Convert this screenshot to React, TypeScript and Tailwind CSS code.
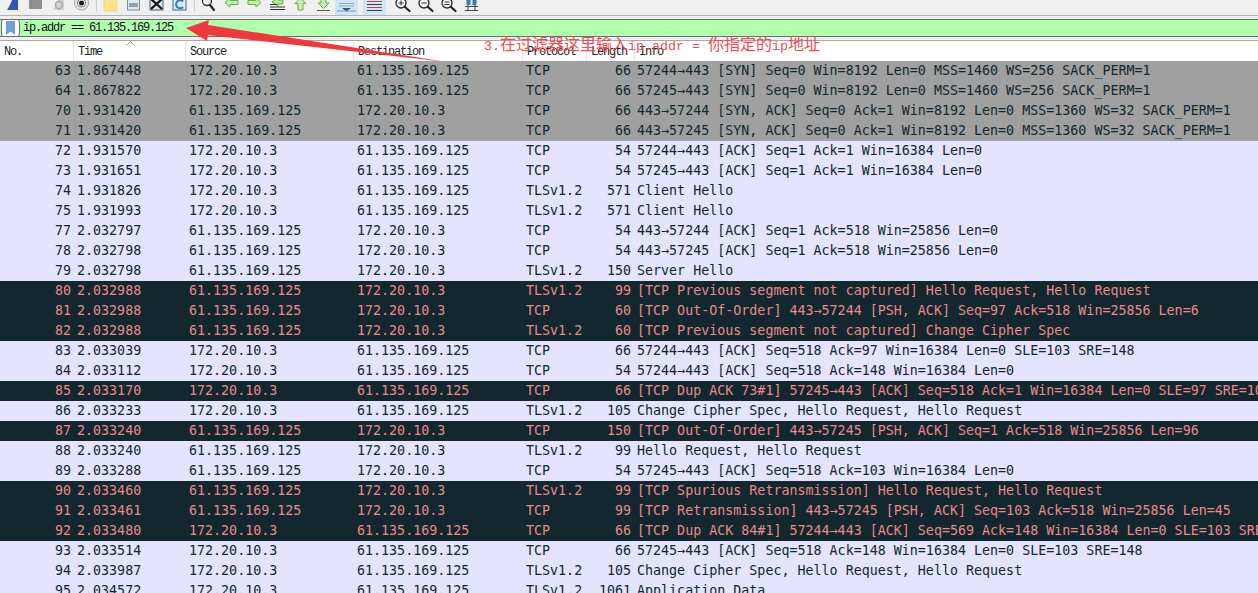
const columnGrid = "grid grid-cols-[73px_112px_168px_169px_64px_48px_1fr]";

type RowKind = "syn" | "normal" | "bad";

const rowStyles: Record<RowKind, string> = {
  syn: "bg-[#a0a0a0] text-[#12272e]",
  normal: "bg-[#e4e4ff] text-[#12272e]",
  bad: "bg-[#12272e] text-[#ea8a8a]",
};

const A = "172.20.10.3";
const B = "61.135.169.125";

const packets: [RowKind, number, string, string, string, string, number, string][] = [
  ["syn", 63, "1.867448", A, B, "TCP", 66, "57244→443 [SYN] Seq=0 Win=8192 Len=0 MSS=1460 WS=256 SACK_PERM=1"],
  ["syn", 64, "1.867822", A, B, "TCP", 66, "57245→443 [SYN] Seq=0 Win=8192 Len=0 MSS=1460 WS=256 SACK_PERM=1"],
  ["syn", 70, "1.931420", B, A, "TCP", 66, "443→57244 [SYN, ACK] Seq=0 Ack=1 Win=8192 Len=0 MSS=1360 WS=32 SACK_PERM=1"],
  ["syn", 71, "1.931420", B, A, "TCP", 66, "443→57245 [SYN, ACK] Seq=0 Ack=1 Win=8192 Len=0 MSS=1360 WS=32 SACK_PERM=1"],
  ["normal", 72, "1.931570", A, B, "TCP", 54, "57244→443 [ACK] Seq=1 Ack=1 Win=16384 Len=0"],
  ["normal", 73, "1.931651", A, B, "TCP", 54, "57245→443 [ACK] Seq=1 Ack=1 Win=16384 Len=0"],
  ["normal", 74, "1.931826", A, B, "TLSv1.2", 571, "Client Hello"],
  ["normal", 75, "1.931993", A, B, "TLSv1.2", 571, "Client Hello"],
  ["normal", 77, "2.032797", B, A, "TCP", 54, "443→57244 [ACK] Seq=1 Ack=518 Win=25856 Len=0"],
  ["normal", 78, "2.032798", B, A, "TCP", 54, "443→57245 [ACK] Seq=1 Ack=518 Win=25856 Len=0"],
  ["normal", 79, "2.032798", B, A, "TLSv1.2", 150, "Server Hello"],
  ["bad", 80, "2.032988", B, A, "TLSv1.2", 99, "[TCP Previous segment not captured] Hello Request, Hello Request"],
  ["bad", 81, "2.032988", B, A, "TCP", 60, "[TCP Out-Of-Order] 443→57244 [PSH, ACK] Seq=97 Ack=518 Win=25856 Len=6"],
  ["bad", 82, "2.032988", B, A, "TLSv1.2", 60, "[TCP Previous segment not captured] Change Cipher Spec"],
  ["normal", 83, "2.033039", A, B, "TCP", 66, "57244→443 [ACK] Seq=518 Ack=97 Win=16384 Len=0 SLE=103 SRE=148"],
  ["normal", 84, "2.033112", A, B, "TCP", 54, "57244→443 [ACK] Seq=518 Ack=148 Win=16384 Len=0"],
  ["bad", 85, "2.033170", A, B, "TCP", 66, "[TCP Dup ACK 73#1] 57245→443 [ACK] Seq=518 Ack=1 Win=16384 Len=0 SLE=97 SRE=103"],
  ["normal", 86, "2.033233", A, B, "TLSv1.2", 105, "Change Cipher Spec, Hello Request, Hello Request"],
  ["bad", 87, "2.033240", B, A, "TCP", 150, "[TCP Out-Of-Order] 443→57245 [PSH, ACK] Seq=1 Ack=518 Win=25856 Len=96"],
  ["normal", 88, "2.033240", B, A, "TLSv1.2", 99, "Hello Request, Hello Request"],
  ["normal", 89, "2.033288", B, A, "TCP", 54, "57245→443 [ACK] Seq=518 Ack=103 Win=16384 Len=0"],
  ["bad", 90, "2.033460", B, A, "TLSv1.2", 99, "[TCP Spurious Retransmission] Hello Request, Hello Request"],
  ["bad", 91, "2.033461", B, A, "TCP", 99, "[TCP Retransmission] 443→57245 [PSH, ACK] Seq=103 Ack=518 Win=25856 Len=45"],
  ["bad", 92, "2.033480", A, B, "TCP", 66, "[TCP Dup ACK 84#1] 57244→443 [ACK] Seq=569 Ack=148 Win=16384 Len=0 SLE=103 SRE=148"],
  ["normal", 93, "2.033514", A, B, "TCP", 66, "57245→443 [ACK] Seq=518 Ack=148 Win=16384 Len=0 SLE=103 SRE=148"],
  ["normal", 94, "2.033987", A, B, "TLSv1.2", 105, "Change Cipher Spec, Hello Request, Hello Request"],
  ["normal", 95, "2.034572", A, B, "TLSv1.2", 1061, "Application Data"],
];

const headers = ["No.", "Time", "Source", "Destination", "Protocol", "Length", "Info"];

function Slot({ children, active }: { children: React.ReactNode; active?: boolean }) {
  return (
    <svg
      viewBox="0 0 23 15"
      className={`w-[23px] h-[15px] shrink-0 ${active ? "bg-[#d3e6f7]" : ""}`}
    >
      {children}
    </svg>
  );
}

const Sep = () => (
  <div className="w-[6px] h-[15px] shrink-0 flex justify-center">
    <div className="w-px h-[12px] bg-[#cfcfcf]" />
  </div>
);

function Magnifier({ sign }: { sign: "plus" | "minus" | "equal" }) {
  return (
    <Slot>
      <circle cx="10" cy="3" r="5" fill="#eef4fa" stroke="#2a2a2a" strokeWidth="1.3" />
      <path d="M14 7l4.5 4" stroke="#222" strokeWidth="2.2" strokeLinecap="round" />
      {sign === "plus" && <path d="M7.5 3h5M10 .5v5" stroke="#333" strokeWidth="1" />}
      {sign === "minus" && <path d="M7.5 3h5" stroke="#333" strokeWidth="1" />}
      {sign === "equal" && <path d="M7.5 2h5M7.5 4.500h5" stroke="#333" strokeWidth="1" />}
    </Slot>
  );
}

function Toolbar() {
  return (
    <div className="flex h-[15px] pl-px overflow-hidden bg-[#f0f0f0]">
      <Slot>
        <path d="M6 10C8 7 10 3 12 -2H17V10Z" fill="#2f55b8" />
      </Slot>
      <Slot>
        <rect x="5" y="-3" width="13" height="12" fill="#8f8f8f" />
      </Slot>
      <Slot>
        <path d="M6 10L12 -2H17V10Z" fill="#d3d3d3" />
        <circle cx="12" cy="5" r="3.500" fill="none" stroke="#a5a5a5" strokeWidth="1.300" />
      </Slot>
      <Slot>
        <circle cx="11.500" cy="3" r="7" fill="#e6e6e6" stroke="#a8a8a8" />
        <circle cx="11.500" cy="3" r="4" fill="#fff" stroke="#777" />
        <circle cx="11.500" cy="3" r="2.500" fill="#1c1c1c" />
      </Slot>
      <Sep />
      <Slot>
        <path d="M5 -2H15L18 2V11H5Z" fill="#fde38c" stroke="#ecc96a" strokeWidth="0.600" />
      </Slot>
      <Slot>
        <rect x="5.500" y="-2" width="12" height="12" fill="#e4e8ec" stroke="#7f8c96" />
        <rect x="7" y="3" width="9" height="4" fill="#8aa2b4" />
      </Slot>
      <Slot>
        <rect x="5" y="-2" width="13" height="12" fill="#dbe7ef" stroke="#45606f" />
        <path d="M6 -1L17 9M17 -1L6 9" stroke="#111" strokeWidth="2.200" />
      </Slot>
      <Slot>
        <rect x="5" y="-2" width="13" height="12" fill="#dfeaf2" stroke="#3d6d8f" />
        <path d="M15 1.500A4 4 0 1 0 15 7" fill="none" stroke="#1f7ec4" strokeWidth="2" />
      </Slot>
      <Sep />
      <Slot>
        <circle cx="10" cy="1" r="4.500" fill="#f4f4f4" stroke="#2b2b2b" strokeWidth="1.300" />
        <path d="M13 5l4 5" stroke="#222" strokeWidth="2.200" strokeLinecap="round" />
      </Slot>
      <Slot>
        <path d="M5 2.500L10 -2V0.500H18V4.500H10V7Z" fill="#c6eeb0" stroke="#6fae4f" />
      </Slot>
      <Slot>
        <path d="M18 2.500L13 -2V0.500H5V4.500H13V7Z" fill="#c6eeb0" stroke="#6fae4f" />
      </Slot>
      <Slot>
        <path d="M6 2L12 -2V0H17V4H12V6Z" fill="#b7e59b" stroke="#6fae4f" />
        <path d="M4 4.500h7M4 7h15M4 9.500h15" stroke="#333" strokeWidth="1" />
      </Slot>
      <Slot>
        <path d="M11.500 -2L17 3.500H14V10H9V3.500H6Z" fill="#c6eeb0" stroke="#6fae4f" />
      </Slot>
      <Slot>
        <path d="M9 -2H14V3H17L11.500 8.500L6 3H9Z" fill="#c6eeb0" stroke="#6fae4f" />
        <path d="M5 10.500h13" stroke="#555" strokeWidth="1" />
      </Slot>
      <Slot active>
        <path d="M4 3.500h15M4 6h15" stroke="#8fa7ba" strokeWidth="1" />
        <path d="M7 8H16L11.500 11.500Z" fill="#24588c" />
        <rect x="2" y="10.500" width="19" height="1" fill="#6f93b5" />
      </Slot>
      <div className="w-[5px] shrink-0" />
      <Slot active>
        <path d="M4 1.500h15M4 7.500h15" stroke="#c93a3a" strokeWidth="1.200" />
        <path d="M4 4.500h15M4 10.500h15" stroke="#33405a" strokeWidth="1.200" />
      </Slot>
      <div className="w-[5px] shrink-0" />
      <Magnifier sign="plus" />
      <Magnifier sign="minus" />
      <Magnifier sign="equal" />
      <Slot>
        <rect x="6.500" y="-1" width="4" height="6" fill="#3f74c0" />
        <rect x="12.500" y="-1" width="4" height="6" fill="#3f74c0" />
        <path d="M5 6.500h13M5 10.500h13M8 5v6M15 5v6" stroke="#333" strokeWidth="0.900" />
      </Slot>
    </div>
  );
}

function FilterBar() {
  return (
    <div className="pt-[3px] pb-[3px] border-t border-t-[#b4b4b4] bg-[#f0f0f0] border-b border-b-[#a8a8a8]">
      <div className="flex h-[18px] border-y border-y-[#6e6e6e] bg-[#afffaf]">
        <div className="w-[19px] ml-[1px] -my-px bg-white border border-[#6e6e6e] rounded-[3px] flex items-center justify-center shrink-0">
          <svg viewBox="0 0 9 14" className="w-[9px] h-[14px]">
            <path d="M0 0H9V14L4.500 10.500L0 14Z" fill="#6f9fdc" />
          </svg>
        </div>
        <span className="pl-[3px] font-['Liberation_Mono',monospace] text-[12px] leading-[17px] tracking-[-1.2px] text-[#111] whitespace-pre">
          ip.addr == 61.135.169.125
        </span>
      </div>
    </div>
  );
}

function HeaderRow() {
  return (
    <div className={`${columnGrid} h-[20px] bg-white relative`}>
      {headers.map((h, i) => (
        <div
          key={h}
          className={`${i === 0 ? "" : "border-l border-l-[#e4e4e4]"} pl-1 font-['Liberation_Mono',monospace] text-[12px] tracking-[-1.2px] leading-[23px] h-[20px] text-[#222]`}
        >
          {h}
        </div>
      ))}
      <svg viewBox="0 0 9 5" className="absolute left-[126px] top-0 w-[9px] h-[5px]">
        <path d="M0.500 4.500L4.500 0.500L8.500 4.500" fill="none" stroke="#9a9a9a" />
      </svg>
    </div>
  );
}

function PacketRow({ row }: { row: (typeof packets)[number] }) {
  const [kind, no, time, src, dst, proto, len, info] = row;
  return (
    <div className={`${columnGrid} h-[20px] leading-[20px] whitespace-nowrap ${rowStyles[kind]}`}>
      <div className="text-right pr-[2px]">{no}</div>
      <div className="pl-1">{time}</div>
      <div className="pl-1">{src}</div>
      <div className="pl-1">{dst}</div>
      <div className="pl-1">{proto}</div>
      <div className="text-right pr-[3px]">{len}</div>
      <div className="pl-[3px]">{info}</div>
    </div>
  );
}

export default function App() {
  return (
    <div className="relative w-[1258px] h-[593px] overflow-hidden bg-white font-['DejaVu_Sans_Mono',monospace] text-[13.33px]">
      <Toolbar />
      <FilterBar />
      <HeaderRow />
      {packets.map((p) => (
        <PacketRow key={p[1]} row={p} />
      ))}

      {/* annotation arrow */}
      <svg viewBox="180 15 270 50" className="absolute left-[180px] top-[15px] w-[270px] h-[50px]">
        <polygon points="186,28 209,20 208,25 447,62 208,35 207,41" fill="#f0393c" />
      </svg>
      <div className="absolute left-[484px] top-[33px] h-[20px] leading-[20px] text-[16px] text-[#ee4b55] whitespace-nowrap font-['Noto_Sans_CJK_SC',sans-serif]">
        <span className="text-[13.33px] font-['Liberation_Mono',monospace]">3.</span>
        在过滤器这里输入
        <span className="text-[13.33px] font-['Liberation_Mono',monospace] whitespace-pre">ip.addr = </span>
        你指定的
        <span className="text-[13.33px] font-['Liberation_Mono',monospace]">ip</span>
        地址
      </div>
    </div>
  );
}
